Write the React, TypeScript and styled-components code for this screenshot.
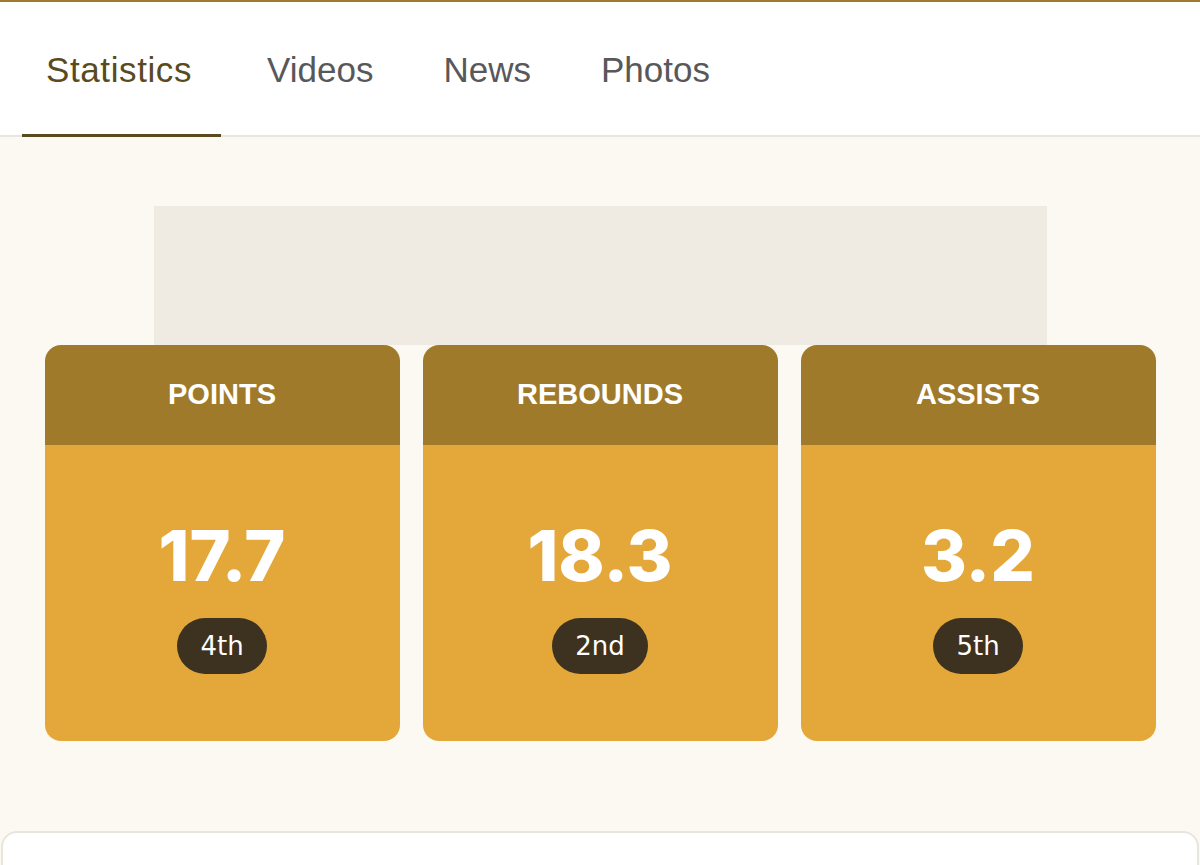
import styled, { createGlobalStyle } from "styled-components";

const GlobalStyle = createGlobalStyle`
  html, body {
    margin: 0;
    padding: 0;
    background: #fcf9f2;
    font-family: "Liberation Sans", Arial, sans-serif;
  }
`;

interface Stat {
  label: string;
  value: string;
  rank: string;
}

const tabs = ["Statistics", "Videos", "News", "Photos"];

const stats: Stat[] = [
  { label: "POINTS", value: "17.7", rank: "4th" },
  { label: "REBOUNDS", value: "18.3", rank: "2nd" },
  { label: "ASSISTS", value: "3.2", rank: "5th" },
];

const App: React.FC = () => {
  return (
    <Root>
      <GlobalStyle />
      <TabBar>
        {tabs.map((t, i) => (
          <Tab key={t} active={i === 0}>
            {t}
          </Tab>
        ))}
      </TabBar>
      <Stage>
        <Banner />
        <CardRow>
          {stats.map(s => (
            <Card key={s.label}>
              <CardHeader>{s.label}</CardHeader>
              <CardBody>
                <Value>{s.value}</Value>
                <Rank>{s.rank}</Rank>
              </CardBody>
            </Card>
          ))}
        </CardRow>
      </Stage>
      <Panel />
    </Root>
  );
};

const Root = styled.div`
  width: 1200px;
  height: 865px;
  overflow: hidden;
  display: flex;
  flex-direction: column;
  border-top: 2px solid #a07a2c;
  box-sizing: border-box;
`;

const TabBar = styled.nav`
  display: flex;
  gap: 22px;
  padding-left: 22px;
  height: 133px;
  background: #fff;
  border-bottom: 2px solid #e8e6e0;
`;

const Tab = styled.div<{ active: boolean }>(p => `
  display: flex;
  align-items: center;
  box-sizing: border-box;
  min-width: ${p.active ? "199px" : "0"};
  padding: 4px 24px 0;
  margin-bottom: -2px;
  font-size: 35px;
  letter-spacing: ${p.active ? "0.6px" : "0"};
  color: ${p.active ? "#5a4a20" : "#58585a"};
  border-bottom: 3px solid ${p.active ? "#5a4a20" : "transparent"};
`);

const Stage = styled.section`
  display: flex;
  flex-direction: column;
  align-items: center;
  padding: 69px 45px 90px;
`;

const Banner = styled.div`
  width: 893px;
  height: 139px;
  background: #efebe3;
`;

const CardRow = styled.div`
  display: grid;
  grid-template-columns: repeat(3, 355px);
  gap: 23px;
`;

const Card = styled.div`
  border-radius: 16px;
  overflow: hidden;
  display: flex;
  flex-direction: column;
`;

const CardHeader = styled.div`
  height: 100px;
  display: flex;
  align-items: center;
  justify-content: center;
  padding-bottom: 2px;
  box-sizing: border-box;
  background: #a07a2b;
  color: #fff;
  font-weight: 700;
  font-size: 29px;
`;

const CardBody = styled.div`
  height: 296px;
  box-sizing: border-box;
  padding-top: 76px;
  display: flex;
  flex-direction: column;
  align-items: center;
  gap: 27px;
  background: #e4a83a;
`;

const Value = styled.div`
  font-family: Inter, "Liberation Sans", sans-serif;
  font-size: 70px;
  line-height: 1;
  font-weight: 800;
  color: #fff;
`;

const Rank = styled.div`
  height: 56px;
  padding: 0 23px;
  display: flex;
  align-items: center;
  border-radius: 28px;
  background: #3d3220;
  color: #fff;
  font-family: "DejaVu Sans", sans-serif;
  font-size: 26px;
`;

const Panel = styled.div`
  flex: 1;
  margin: 0 1px;
  background: #fff;
  border: 2px solid #e8e5dd;
  border-bottom: none;
  border-radius: 16px 16px 0 0;
`;

export default App;
